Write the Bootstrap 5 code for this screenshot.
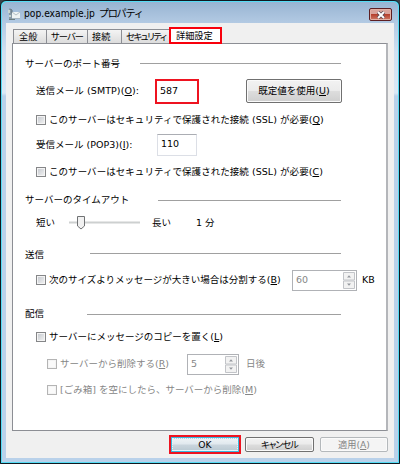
<!DOCTYPE html>
<html lang="ja">
<head>
<meta charset="utf-8">
<title>pop.example.jp プロパティ</title>
<link href="https://cdn.jsdelivr.net/npm/bootstrap@5.3.0/dist/css/bootstrap.min.css" rel="stylesheet">
<style>
html,body{height:464px;overflow:hidden}
body{font:9.5px/14px "DejaVu Sans","Noto Sans CJK JP",sans-serif;color:#000;background:#3b4148}
.window{width:400px;height:464px;border:1px solid #101820;border-radius:6px 6px 0 0;background:#55dcf5;padding:1px}
.frame{height:460px;background:linear-gradient(#98b4d2 0,#b4cbe4 22px,#cfe0f1 50px,#dbe8f5 91px,#b9d1ea 94px);border-radius:5px 5px 0 0;padding:0 4px 4px}
.titlebar{height:21px}
.app-icon{margin:6px 0 0 2px}
.title-text{font-family:"DejaVu Sans Condensed","Noto Sans CJK JP",sans-serif;font-size:10.2px;margin:5px 0 0 4px;white-space:nowrap}
.title-kana{letter-spacing:-1.3px;margin-left:1px}
.closer{width:23px;height:13px;border:1px solid #5d1e22;border-radius:2px;background:linear-gradient(#d9a39b 45%,#b5402e 50%,#cf7a66);box-shadow:inset 0 0 0 1px #e3b0a5;margin-top:6px;margin-right:2px}
.client{height:435px;background:#f0f0f0;padding:5px 6px 0 6px}
.tabs{height:15px}
.tab-item{height:14px;margin-top:1px;border:1px solid #8c8e94;border-bottom:0;border-left-width:0;background:linear-gradient(#f4f4f4,#dcdcdc);padding-left:5px;font-size:9.2px;line-height:14px;white-space:nowrap;overflow:hidden}
.tab-first{border-left-width:1px;margin-left:1px}
.tab-on{width:53px;height:17px;margin:-1px 0 0 -1px;border:2px solid #f8000c;background:#fff;padding-left:5px;font-size:9.2px;line-height:14px;z-index:1;position:relative;white-space:nowrap}
.kana{font-feature-settings:"palt"}
.sheet{height:388px;background:#fff;border:1px solid #8c8e94;border-right:2px solid #b4b6ba;padding:10px 45px 0 12px}
.form-line{display:flex;align-items:center;white-space:nowrap}
.form-line>*{flex-shrink:0}
.rule{height:1px;background:#a0a0a0;flex:1 1 0;margin-left:auto}
.ind{padding-left:11px}
.ind2{padding-left:22px}
.h18{height:18px}.h20{height:20px}.h24{height:24px}.h26{height:26px}.h28{height:28px}.h30{height:30px}.h34{height:34px}
.box{width:10px;height:10px;border:1px solid #858688;background:linear-gradient(135deg,#c2c6cc,#f4f4f4);box-shadow:inset 0 0 0 1px #f4f4f4;margin-right:3px}
.off{color:#868686}
.off .box{border-color:#b4b4b4;background:#fafafa}
.field{height:22px;width:40px;border:1px solid #dcdfe6;border-top-color:#abadb3;padding-left:3px;line-height:18px}
.field-hot{height:25px;width:44px;border:2px solid #ee1320;padding-left:3px;line-height:19px}
.w-label{width:119px}
.cmd{border:1px solid #707070;border-radius:2px;background:linear-gradient(#f2f2f2 0,#ebebeb 48%,#dddddd 52%,#cfcfcf);box-shadow:inset 0 0 0 1px #fafafa;text-align:center;color:#000;white-space:nowrap}
.cmd-default{width:96px;height:24px;line-height:22px;margin-right:-1px}
.cmd-foot{width:69px;height:15px;line-height:14px;font-size:9.2px}
.cmd-off{border-color:#b4b8bb;background:#f4f4f4;color:#868686}
.cmd-ok{width:72px;height:19px;border:2px solid #ee1320;background:#3bb6dc;padding:1px;margin-right:4px}
.ok-face{height:13px;line-height:12px;text-align:center;border:1px dotted #e3f8ff;background:linear-gradient(#edf2f5 0,#e0e8ee 48%,#cbd6de 52%,#bccbd4);font-size:9.2px}
.spin{height:21px;border:1px solid #b0b2b6;background:#fff;padding:1px 1px 1px 3px;line-height:16px;color:#868686}
.foot{padding:4px 0 0}
</style>
<script src="https://cdn.jsdelivr.net/npm/bootstrap@5.3.0/dist/js/bootstrap.bundle.min.js"></script>
</head>
<body>
<div class="window"><div class="frame">
<div class="titlebar d-flex align-items-start">
  <svg class="app-icon" width="12" height="13" viewBox="0 0 12 13"><path d="M1 1h3v10H1z" fill="#8798a4"/><path d="M0 2h2v3H0zM1 7h2v2H1z" fill="#c8d3cf"/><path d="M2 .5l2 2v3" stroke="#5b6d78" fill="none"/><path d="M4 4h8v6H4z" fill="#eef3f3"/><path d="M4 4l4 3 4-3M4 10.500h8" stroke="#a4b1b8" stroke-width=".8" fill="none"/><path d="M1 11.500h6" stroke="#6b7d80"/></svg>
  <div class="title-text">pop.example.jp <span class="title-kana">プロパティ</span></div>
  <div class="closer ms-auto d-flex align-items-center justify-content-center"><svg width="10" height="8" viewBox="0 0 10 8"><path d="M2 1l6 6M8 1L2 7" stroke="#5c4a55" stroke-width="3.4"/><path d="M2 1l6 6M8 1L2 7" stroke="#fff" stroke-width="1.9"/></svg></div>
</div>
<div class="client">
<div class="tabs d-flex">
  <div class="tab-item tab-first" style="width:34px">全般</div>
  <div class="tab-item kana" style="width:41px;letter-spacing:-.8px;padding-left:4px">サーバー</div>
  <div class="tab-item" style="width:34px;padding-left:4px">接続</div>
  <div class="tab-item kana" style="width:48px;letter-spacing:-1.3px;padding-left:4px">セキュリティ</div>
  <div class="tab-on">詳細設定</div>
</div>
<div class="sheet">
  <div class="form-line h20"><span>サーバーのポート番号</span><div class="rule" style="max-width:201px;margin-bottom:2px"></div></div>
  <div class="form-line ind h34"><span class="w-label" style="letter-spacing:.08px">送信メール (SMTP)(<u>O</u>):</span><div class="field-hot">587</div><div class="cmd cmd-default ms-auto">既定値を使用(<u>U</u>)</div></div>
  <div class="form-line ind h24"><i class="box"></i><span style="letter-spacing:.05px">このサーバーはセキュリティで保護された接続 (SSL) が必要(<u>Q</u>)</span></div>
  <div class="form-line ind h26"><span class="w-label" style="width:121px">受信メール (POP3)(<u>I</u>):</span><div class="field">110</div></div>
  <div class="form-line ind h28"><i class="box"></i><span style="letter-spacing:.05px">このサーバーはセキュリティで保護された接続 (SSL) が必要(<u>C</u>)</span></div>
  <div class="form-line h28"><span>サーバーのタイムアウト</span><div class="rule" style="max-width:183px"></div></div>
  <div class="form-line ind h18"><span style="width:33px">短い</span><svg width="71" height="16" viewBox="0 0 71 16"><path d="M0 7.500h71" stroke="#cdd0d0" stroke-width="2"/><path d="M8.500 1.500h7v9.500l-3.500 3-3.500-3z" fill="#f1f1f1" stroke="#707274"/></svg><span style="width:56px;padding-left:12px">長い</span><span>1 分</span></div>
  <div class="form-line h20" style="margin-top:13px"><span>送信</span><div class="rule" style="max-width:251px;margin-bottom:3px"></div></div>
  <div class="form-line ind h30"><i class="box"></i><span style="width:243px">次のサイズよりメッセージが大きい場合は分割する(<u>B</u>)</span>
    <div class="spin d-flex justify-content-between" style="width:65px">60<span><svg class="d-block" width="12" height="17" viewBox="0 0 12 17"><path d="M.5.5h11v7.500H.5zM.5 9h11v7.500H.5z" fill="#f2f2f2" stroke="#c2c4c8"/><path d="M4 5.500l2-2.200 2 2.200zM4 11.500l2 2.200 2-2.200z" fill="#92969c"/></svg></span></div><span style="margin-left:5px">KB</span></div>
  <div class="form-line h26" style="margin-top:6px"><span>配信</span><div class="rule" style="max-width:254px"></div></div>
  <div class="form-line ind h20"><i class="box"></i><span>サーバーにメッセージのコピーを置く(<u>L</u>)</span></div>
  <div class="form-line ind2 h34 off"><i class="box"></i><span style="width:127px">サーバーから削除する(<u>R</u>)</span>
    <div class="spin d-flex justify-content-between" style="width:52px">5<span><svg class="d-block" width="12" height="17" viewBox="0 0 12 17"><path d="M.5.5h11v7.500H.5zM.5 9h11v7.500H.5z" fill="#f2f2f2" stroke="#c2c4c8"/><path d="M4 5.500l2-2.200 2 2.200zM4 11.500l2 2.200 2-2.200z" fill="#92969c"/></svg></span></div><span style="margin-left:7px">日後</span></div>
  <div class="form-line ind2 h18 off"><i class="box"></i><span>[ごみ箱] を空にしたら、サーバーから削除(<u>M</u>)</span></div>
</div>
<div class="foot d-flex justify-content-end align-items-center">
  <div class="cmd-ok"><div class="ok-face">OK</div></div>
  <div class="cmd cmd-foot kana" style="letter-spacing:-1px;margin-right:6px">キャンセル</div>
  <div class="cmd cmd-foot cmd-off" style="width:68px">適用(<u>A</u>)</div>
</div>
</div>
</div></div>
</body>
</html>
